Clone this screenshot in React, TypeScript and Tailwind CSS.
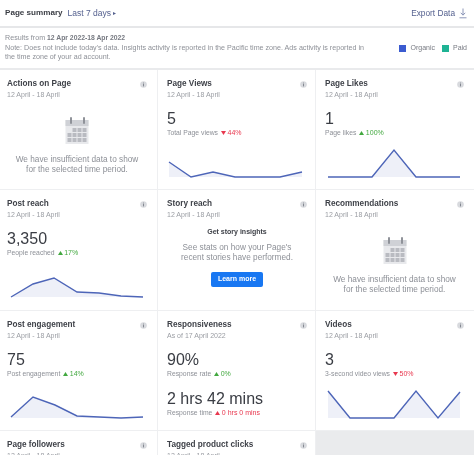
import React from "react";

function Info() {
  return (
    <svg width="7" height="7" viewBox="0 0 7 7" className="shrink-0">
      <circle cx="3.5" cy="3.5" r="3.3" fill="#d8dade" />
      <rect x="3.1" y="3" width="0.9" height="2.4" fill="#7c808a" />
      <rect x="3.1" y="1.6" width="0.9" height="0.9" fill="#7c808a" />
    </svg>
  );
}

function Calendar() {
  return (
    <svg width="24" height="27" viewBox="0 0 24 27" className="block">
      <rect x="0.5" y="3" width="23" height="24" fill="#e8e9ec" />
      <rect x="0.5" y="3" width="23" height="6" fill="#cfd1d6" />
      {[0, 1, 2].map((r) =>
        [0, 1, 2, 3].map((c) =>
          c === 0 && r === 0 ? null : (
            <rect key={`${r}-${c}`} x={2.5 + c * 5} y={11 + r * 5} width="4" height="4" fill="#b9bbc1" />
          )
        )
      )}
      <rect x="5" y="0" width="2" height="7" rx="1" fill="#8f9299" />
      <rect x="18" y="0" width="2" height="7" rx="1" fill="#8f9299" />
    </svg>
  );
}

function Insufficient() {
  return (
    <div className="flex flex-col items-center mt-[17px]">
      <Calendar />
      <p className="mt-[11px] text-center text-[8.25px] leading-[9.5px] text-[#8d9097] w-[132px]">
        We have insufficient data to show for the selected time period.
      </p>
    </div>
  );
}

function Delta({ v, up, red }: { v: string; up: boolean; red: boolean }) {
  const color = red ? "text-[#e8384f]" : "text-[#42a83f]";
  return (
    <span className={`inline-flex items-center gap-[1.5px] ml-[3px] text-[7px] ${color}`}>
      <svg width="5" height="4" viewBox="0 0 5 4" fill="currentColor">
        <path d={up ? "M2.5 0L5 4H0Z" : "M0 0H5L2.5 4Z"} />
      </svg>
      {v}
    </span>
  );
}

function Metric({ value, label, delta, top }: { value: string; label: string; delta: React.ReactNode; top: string }) {
  return (
    <div className={top}>
      <div className="text-[16px] leading-[20px] text-[#3a3d44]">{value}</div>
      <div className="flex items-center text-[6.8px] leading-[10px] text-[#8d9097] -mt-[1px] whitespace-nowrap">
        {label}
        {delta}
      </div>
    </div>
  );
}

function Chart({ points, ml }: { points: number[][]; ml: string }) {
  const line = points.map((p) => p.join(",")).join(" ");
  const last = points[points.length - 1][0];
  const first = points[0][0];
  return (
    <svg width="140" height="31" viewBox="0 0 140 31" className={`block mt-[10px] ${ml}`}>
      <polygon points={`${first},29 ${line} ${last},29`} fill="#eef0f8" />
      <polyline points={line} fill="none" stroke="#4d65b8" strokeWidth="1.4" />
    </svg>
  );
}

function Cell({ title, date, children, border = true, pad }: { title: string; date: string; children?: React.ReactNode; border?: boolean; pad: string }) {
  return (
    <div className={`${pad} pt-[8px] min-w-0 ${border ? "border-r border-[#eeeff1]" : ""} border-b border-b-[#eeeff1]`}>
      <div className="flex items-center justify-between h-[12px]">
        <span className="text-[8.2px] font-bold text-[#3f4249] whitespace-nowrap">{title}</span>
        <Info />
      </div>
      <div className="text-[7px] leading-[10px] text-[#9a9da3]">{date}</div>
      {children}
    </div>
  );
}

const D = "12 April - 18 April";
const A = "pl-[7px] pr-[10px]";
const B = "pl-[9px] pr-[8px]";
const C = "pl-[9px] pr-[10px]";

export default function App() {
  return (
    <div className="w-[474px] h-[455px] overflow-hidden bg-white blur-[0.3px]" style={{ fontFamily: '"Liberation Sans", Arial, sans-serif' }}>
      <header className="h-[28px] flex items-center justify-between pl-[5px] pr-[7px] border-b-2 border-[#e6e7e9]">
        <div className="flex items-center gap-[5px]">
          <span className="text-[8.1px] font-bold text-[#3a3d44]">Page summary</span>
          <span className="text-[8.5px] text-[#55618f] flex items-center gap-[2px]">
            Last 7 days <span className="text-[6px]">▸</span>
          </span>
        </div>
        <div className="flex items-center gap-[4px] text-[8.3px] text-[#55618f]">
          Export Data
          <svg width="8" height="11" viewBox="0 0 8 11" fill="none" stroke="#7f8ab0" strokeWidth="0.9">
            <path d="M4 0.5V7M1.8 4.8L4 7.2L6.2 4.8M0.5 9.8H7.5" />
          </svg>
        </div>
      </header>

      <section className="h-[42px] flex items-center justify-between pl-[5px] pr-[7px] border-b-2 border-[#e9eaec]">
        <div className="w-[365px] text-[7.15px] leading-[9.5px] text-[#8d9097]">
          <div>
            Results from <span className="font-bold text-[#777a82] text-[6.8px]">12 Apr 2022-18 Apr 2022</span>
          </div>
          <div>Note: Does not include today's data. Insights activity is reported in the Pacific time zone. Ads activity is reported in the time zone of your ad account.</div>
        </div>
        <div className="flex items-center text-[7px] text-[#777a82] gap-[4px] mt-[1px]">
          <span className="w-[7px] h-[7px] bg-[#3b5bd0]" />
          <span>Organic</span>
          <span className="w-[7px] h-[7px] bg-[#1fb394] ml-[3px]" />
          <span>Paid</span>
        </div>
      </section>

      <main className="grid grid-cols-[158px_158px_158px] grid-rows-[120px_121px_120px_60px]">
        <Cell title="Actions on Page" date={D} pad={A}>
          <Insufficient />
        </Cell>
        <Cell title="Page Views" date={D} pad={B}>
          <Metric top="mt-[9px]" value="5" label="Total Page views" delta={<Delta v="44%" up={false} red />} />
          <Chart ml="ml-[1px]" points={[[1, 14], [23, 29], [45, 24], [67, 29], [89, 29], [112, 29], [134, 24]]} />
        </Cell>
        <Cell title="Page Likes" date={D} border={false} pad={C}>
          <Metric top="mt-[9px]" value="1" label="Page likes" delta={<Delta v="100%" up red={false} />} />
          <Chart ml="ml-[0px]" points={[[3, 29], [47, 29], [69, 2], [91, 29], [135, 29]]} />
        </Cell>

        <Cell title="Post reach" date={D} pad={A}>
          <Metric top="mt-[9px]" value="3,350" label="People reached" delta={<Delta v="17%" up red={false} />} />
          <Chart ml="ml-[2px]" points={[[2, 29], [24, 16], [45, 10], [68, 24], [90, 25], [112, 28], [134, 29]]} />
        </Cell>
        <Cell title="Story reach" date={D} pad={B}>
          <div className="flex flex-col items-center">
            <p className="mt-[7px] text-[7px] leading-[10px] font-bold text-[#3f4249]">Get story insights</p>
            <p className="mt-[6px] text-center text-[8.25px] leading-[9.5px] text-[#8d9097] w-[125px]">
              See stats on how your Page's recent stories have performed.
            </p>
            <button className="mt-[10px] w-[52px] h-[15px] rounded-[2px] bg-[#1877f2] text-white text-[7px] font-bold">Learn more</button>
          </div>
        </Cell>
        <Cell title="Recommendations" date={D} border={false} pad={C}>
          <Insufficient />
        </Cell>

        <Cell title="Post engagement" date={D} pad={A}>
          <Metric top="mt-[9px]" value="75" label="Post engagement" delta={<Delta v="14%" up red={false} />} />
          <Chart ml="ml-[2px]" points={[[2, 28], [24, 8], [46, 16], [68, 27], [90, 28], [112, 29], [134, 28]]} />
        </Cell>
        <Cell title="Responsiveness" date="As of 17 April 2022" pad={B}>
          <Metric top="mt-[9px]" value="90%" label="Response rate" delta={<Delta v="0%" up red={false} />} />
          <Metric top="mt-[10px]" value="2 hrs 42 mins" label="Response time" delta={<Delta v="0 hrs 0 mins" up red />} />
        </Cell>
        <Cell title="Videos" date={D} border={false} pad={C}>
          <Metric top="mt-[9px]" value="3" label="3-second video views" delta={<Delta v="50%" up={false} red />} />
          <Chart ml="ml-[0px]" points={[[3, 2], [25, 29], [69, 29], [91, 2], [113, 29], [135, 3]]} />
        </Cell>

        <Cell title="Page followers" date={D} pad={A} />
        <Cell title="Tagged product clicks" date={D} pad={B} />
        <div className="bg-[#eaebed]" />
      </main>
    </div>
  );
}
